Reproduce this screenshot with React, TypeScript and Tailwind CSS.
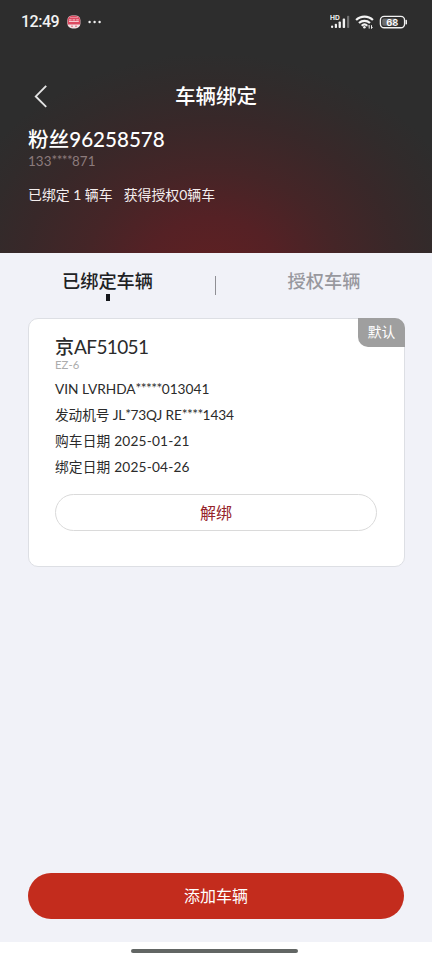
import React, { useState } from "react";

type Tab = "bound" | "authorized";

const vehicle = {
  plate: { region: "京", number: "AF51051" },
  model: "EZ-6",
  details: [
    { label: "VIN", value: "LVRHDA*****013041", tracking: "tracking-[0px]" },
    { label: "发动机号", value: "JL*73QJ RE****1434", tracking: "tracking-[-0.12px]" },
    { label: "购车日期", value: "2025-01-21", tracking: "tracking-[0.18px]" },
    { label: "绑定日期", value: "2025-04-26", tracking: "tracking-[0.18px]" },
  ],
};

// Masked characters sit a little higher and tighter than the rest of the value
const Masked: React.FC<{ text: string }> = ({ text }) => (
  <>
    {text.split(/(\*+)/).map((part, i) =>
      part.startsWith("*") ? (
        <span key={i} className="relative -top-[1.5px] tracking-[-0.6px]">
          {part}
        </span>
      ) : (
        part
      )
    )}
  </>
);

const SignalIcon: React.FC = () => (
  <svg width="25" height="16" viewBox="0 0 25 16" fill="#f2f2f2">
    <text x="0" y="6" fontSize="6.6" fontWeight="700" fontFamily="Inter, sans-serif">
      HD
    </text>
    <rect x="1" y="11.6" width="2.2" height="2.4" rx="1" />
    <rect x="4.8" y="9.8" width="2.2" height="4.2" rx="0.8" />
    <rect x="8.6" y="7.4" width="2.3" height="6.6" rx="0.8" />
    <rect x="12.7" y="4.6" width="2.4" height="9.4" rx="0.8" />
    <rect x="17" y="1.8" width="2.2" height="12.2" rx="0.8" opacity="0.35" />
  </svg>
);

const WifiIcon: React.FC = () => (
  <svg width="20" height="16" viewBox="0 0 20 16" fill="none" stroke="#f2f2f2" strokeWidth="2.2">
    <path d="M1.1 6a12 12 0 0 1 16.8 0" />
    <path d="M4 9a8 8 0 0 1 11 0" />
    <path d="M6.7 11.7a4.2 4.2 0 0 1 5.6 0" />
    <circle cx="9.4" cy="13.2" r="1.3" fill="#f2f2f2" stroke="none" />
    <path d="M14.2 14.6v-3.3l-1.1 1.1M16.5 11.2v3.3l1.1-1.1" strokeWidth="1" />
  </svg>
);

const StatusBar: React.FC = () => (
  <div className="flex h-[44px] items-center justify-between pl-[21px] pr-[24px] text-[#f2f2f2]">
    <div className="flex items-center">
      <span className="w-[46px] font-[Roboto,sans-serif] text-[16px] leading-none font-medium tracking-[-0.5px]">
        12:49
      </span>
      {/* Notification source icon */}
      <svg width="14" height="14" viewBox="0 0 14 14">
        <rect x="0.4" y="0.4" width="13" height="13" rx="5" fill="#f3dfe2" />
        <path d="M.8 4C2 1.2 4 .8 7 .8s5 .6 6.1 3.2V9.6H.8Z" fill="#dc4960" />
        <path d="M3 2.5h8" stroke="#f0b3bc" strokeWidth="0.6" />
        <path d="M2 4.9h2.6M5.6 4.9h2.6M9.2 4.9h2.6M2 6.5h9.8" stroke="#f7d8dc" strokeWidth="0.9" />
        <path d="M4 11.2h2M8 11.2h2" stroke="#df6678" strokeWidth="1" />
      </svg>
      <svg className="ml-[7px]" width="14" height="4" viewBox="0 0 14 4" fill="#f2f2f2">
        <circle cx="1.6" cy="2" r="1.2" />
        <circle cx="6.6" cy="2" r="1.2" />
        <circle cx="11.6" cy="2" r="1.2" />
      </svg>
    </div>
    <div className="flex items-center">
      <SignalIcon />
      <WifiIcon />
      <svg className="ml-1" width="29" height="14" viewBox="0 0 29 14">
        <rect x="1.4" y="1.4" width="24.2" height="11.4" rx="3.8" fill="none" stroke="#f2f2f2" strokeWidth="1.4" />
        <path d="M5 3.4h12v7.4H5A1.8 1.8 0 0 1 3.2 9V5.2A1.8 1.8 0 0 1 5 3.4Z" fill="#6c6c6c" />
        <path d="M27.3 5.4v3.4" stroke="#f2f2f2" strokeWidth="1.4" strokeLinecap="round" />
        <text x="13.2" y="10.6" textAnchor="middle" fontSize="9.4" fontWeight="600" fill="#fff" fontFamily="Inter, sans-serif">
          68
        </text>
      </svg>
    </div>
  </div>
);

const App: React.FC = () => {
  const [tab, setTab] = useState<Tab>("bound");

  return (
    <div className="flex h-[960px] w-[432px] flex-col overflow-hidden bg-[#f1f2f8] font-[Lato,'Noto_Sans_CJK_SC',sans-serif] whitespace-nowrap">
      {/* Header */}
      <header className="h-[253px] shrink-0 bg-[#2d2d2d] bg-[radial-gradient(ellipse_270px_220px_at_49%_108%,#5f2022_0%,#552125_25%,#452527_47%,#382829_70%,#312b2b_86%,#2d2d2d_100%)] text-white">
        <StatusBar />
        <div className="mt-[33px] flex h-[38px] items-center">
          <button className="flex w-[80px] pl-[34px]" aria-label="返回">
            <svg width="14" height="24" viewBox="0 0 14 24" fill="none" stroke="#e4e4e4" strokeWidth="1.9">
              <path d="M12.2 1.8 1.8 12.4l10.4 10.4" />
            </svg>
          </button>
          <h1 className="flex-1 text-center text-[20.5px] leading-none font-medium">车辆绑定</h1>
          <span className="w-[80px]" />
        </div>
        <div className="pl-7">
          <p className="mt-[9px] text-[20.6px] leading-[30px] font-medium">粉丝96258578</p>
          <p className="text-[13.4px] leading-[14px] tracking-[0.1px] text-[#8c7b7c]">
            <Masked text="133****871" />
          </p>
          <div className="mt-[17px] flex gap-[11px] text-[13.9px] leading-5 text-[#f4eeee]">
            <span>已绑定 1 辆车</span>
            <span>获得授权0辆车</span>
          </div>
        </div>
      </header>

      {/* Tabs */}
      <nav className="flex h-[65px] shrink-0 text-[18.2px] leading-[26px]">
        <button
          onClick={() => setTab("bound")}
          className={`flex w-[215px] flex-col items-center pt-[15px] font-medium ${tab === "bound" ? "text-[#202124]" : "text-[#98989e]"}`}
        >
          已绑定车辆
          {tab === "bound" && <span className="h-[7px] w-1 bg-[#15171b]" />}
        </button>
        <span className="mt-[23px] h-[19px] w-px bg-[#8f8f94]" />
        <button
          onClick={() => setTab("authorized")}
          className={`flex w-[216px] flex-col items-center pt-[15px] font-medium ${tab === "authorized" ? "text-[#202124]" : "text-[#98989e]"}`}
        >
          授权车辆
        </button>
      </nav>

      {/* Vehicle card */}
      <main className="flex-1 px-7">
        <section className="relative h-[249px] w-[377px] rounded-[10px] border border-[#dddfe4] bg-white pt-[13px] pl-[26px] text-[#2b2b2b]">
          <span className="absolute -top-px -right-px flex h-[29px] w-[47px] items-center justify-center rounded-tr-[10px] rounded-bl-[10px] bg-[#9f9f9f] text-[13.8px] text-white">
            默认
          </span>
          <h2 className="text-[19px] leading-[29px] font-medium">
            {vehicle.plate.region}
            <span className="font-normal tracking-[-0.62px]">{vehicle.plate.number}</span>
          </h2>
          <p className="text-[11.3px] leading-[8px] tracking-[0.1px] text-[#acacac]">{vehicle.model}</p>
          <div className="mt-[7px] text-[13.7px] leading-[26px]">
            {vehicle.details.map((d) => (
              <p key={d.label} className={d.tracking}>
                {d.label} <Masked text={d.value} />
              </p>
            ))}
          </div>
          <button className="mt-[14px] h-[37px] w-[322px] rounded-full border border-[#dadada] text-[16px] leading-none text-[#96242b]">
            解绑
          </button>
        </section>
      </main>

      <footer className="shrink-0">
        <button className="mx-7 mb-[23px] block h-[46px] w-[376px] rounded-full bg-[#c32c1d] text-[16px] leading-none text-white">
          添加车辆
        </button>
        {/* Home indicator */}
        <div className="flex h-[18px] bg-white pt-[7px]">
          <span className="ml-[131px] h-[4px] w-[167px] rounded-full bg-[#626664]" />
        </div>
      </footer>
    </div>
  );
};

export default App;
